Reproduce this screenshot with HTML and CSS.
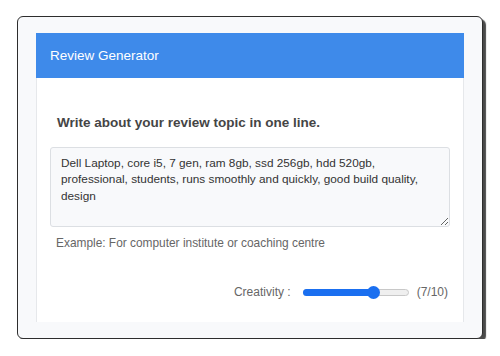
FILE: index.html
```html
<!DOCTYPE html>
<html>
<head>
<meta charset="utf-8">
<link rel="stylesheet" href="styles.css">
</head>
<body>
<div class="frame">
  <div class="viewport">
    <div class="card">
      <div class="card-header">Review Generator</div>
      <div class="card-body">
        <h2 class="title">Write about your review topic in one line.</h2>
        <textarea class="topic">Dell Laptop, core i5, 7 gen, ram 8gb, ssd 256gb, hdd 520gb, professional, students, runs smoothly and quickly, good build quality, design</textarea>
        <p class="hint">Example: For computer institute or coaching centre</p>
        <div class="creativity">
          <span class="label">Creativity :</span>
          <div class="slider">
            <div class="fill" style="width: 67%"></div>
            <div class="thumb" style="left: 67%"></div>
          </div>
          <span class="value">(7/10)</span>
        </div>
      </div>
    </div>
  </div>
</div>
</body>
</html>
```
FILE: styles.css
```css
* { box-sizing: border-box; }
html, body { margin: 0; padding: 0; background: #ffffff; }
body { font-family: "Liberation Sans", Arial, sans-serif; }

.frame {
  margin: 16px 0 0 17px;
  width: 466px;
  height: 323px;
  border: 1.5px solid #2d2d2d;
  border-radius: 6px;
  background: #f8f9fb;
  box-shadow: 3px 3px 1px #4a4a4a;
  padding: 16px 18px 16px 18px;
}
.viewport {
  height: 100%;
  overflow: hidden;
}
.card {
  border: 1px solid #e6e8eb;
  border-top: none;
  background: #ffffff;
  height: 330px;
}
.card-header {
  height: 45px;
  background: #3e8aea;
  color: #ffffff;
  font-size: 13.5px;
  line-height: 45px;
  padding-left: 14px;
  margin: 0 -1px;
}
.card-body {
  padding: 35px 13px 0 13px;
}
.title {
  margin: 0 0 15px 7px;
  font-size: 13.5px;
  line-height: 19px;
  font-weight: bold;
  color: #454545;
}
.topic {
  display: block;
  width: 100%;
  height: 80px;
  margin: 0;
  padding: 7px 10px;
  border: 1px solid #dcdfe3;
  border-radius: 3px;
  background: #f8f9fb;
  font-family: "Liberation Sans", Arial, sans-serif;
  font-size: 11.8px;
  line-height: 16.3px;
  color: #333333;
  resize: vertical;
}
.hint {
  margin: 8px 0 0 6px;
  font-size: 11.9px;
  line-height: 16px;
  color: #666666;
}
.creativity {
  display: flex;
  align-items: center;
  justify-content: flex-end;
  margin-top: 34px;
  padding-right: 2px;
  font-size: 12px;
  color: #666666;
}
.label { margin-right: 12px; }
.slider {
  position: relative;
  width: 106px;
  height: 7px;
  border: 1px solid #c8c8c8;
  border-radius: 4px;
  background: #efefef;
  margin-right: 8px;
}
.fill {
  position: absolute;
  left: -1px;
  top: -1px;
  bottom: -1px;
  background: #1a6ff0;
  border-radius: 4px;
}
.thumb {
  position: absolute;
  top: 50%;
  width: 13px;
  height: 13px;
  margin: -6.5px 0 0 -6.5px;
  border-radius: 50%;
  background: #1a6ff0;
}
```
